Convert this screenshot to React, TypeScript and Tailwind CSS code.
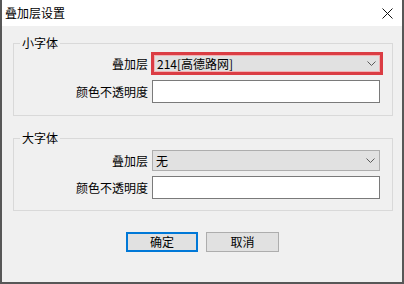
import React from "react";

function Chevron() {
  return (
    <svg width="9" height="5" viewBox="0 0 9 5" className="shrink-0">
      <path d="M0.5 0.5 L4.5 4.5 L8.5 0.5" fill="none" stroke="#5a5a5a" strokeWidth="1" />
    </svg>
  );
}

function Select({ text, highlight }: { text: string; highlight?: boolean }) {
  return highlight ? (
    <div className="flex items-center justify-between h-[23px] w-[232px] border-[3px] border-[#db3d44] bg-[#e1e1e1] shadow-[inset_0_0_0_1px_#f2b3b5] pl-[3px] pr-[4px]">
      <span className="text-[12px] leading-[15px] text-black">{text}</span>
      <Chevron />
    </div>
  ) : (
    <div className="flex items-center justify-between h-[21px] w-[228px] border border-[#adadad] bg-[#e1e1e1] pl-[3px] pr-[4px]">
      <span className="text-[12px] leading-[15px] text-black">{text}</span>
      <Chevron />
    </div>
  );
}

function Group({
  title,
  selectText,
  highlight,
  className,
}: {
  title: string;
  selectText: string;
  highlight?: boolean;
  className: string;
}) {
  return (
    <fieldset className={"border border-[#d9d9d9] px-0 " + className}>
      <legend className="ml-[6px] px-[2px] text-[12px] leading-[16px] text-black">{title}</legend>
      <div className="flex items-center">
        <div className="w-[134px] text-right text-[12px] leading-[16px] text-black">叠加层</div>
        <div className={highlight ? "ml-[3px]" : "ml-[4px]"}>
          <Select text={selectText} highlight={highlight} />
        </div>
      </div>
      <div className="flex items-center mt-[5px]">
        <div className="w-[134px] text-right text-[12px] leading-[16px] text-black">颜色不透明度</div>
        <div className="ml-[4px] h-[23px] w-[228px] border border-[#7a7a7a] bg-white" />
      </div>
    </fieldset>
  );
}

export default function App() {
  return (
    <div className="w-[404px] h-[284px] flex flex-col border-l-2 border-r-2 border-b-2 border-[#575757] bg-[#f0f0f0] font-['Noto_Sans_CJK_SC','Noto_Sans',sans-serif] overflow-hidden">
      <div className="h-[26px] shrink-0 bg-white flex items-center justify-between pl-[3px] pr-[9px]">
        <span className="text-[12px] leading-[16px] text-black">叠加层设置</span>
        <svg width="11" height="11" viewBox="0 0 11 11">
          <path d="M0.5 0.5 L10.5 10.5 M10.5 0.5 L0.5 10.5" stroke="#111" strokeWidth="1" fill="none" />
        </svg>
      </div>
      <div className="flex flex-col flex-1">
        <Group
          title="小字体"
          selectText="214[高德路网]"
          highlight
          className="mt-[9px] ml-[11px] mr-[9px] pt-[1px] pb-[12px]"
        />
        <Group
          title="大字体"
          selectText="无"
          className="mt-[14px] ml-[11px] mr-[9px] pt-[4px] pb-[11px]"
        />
        <div className="flex justify-center gap-[8px] mt-[21px] pl-[1px]">
          <button className="h-[20px] w-[72px] border-2 border-[#0078d7] bg-[#e1e1e1] text-[12px] leading-[14px] text-black">
            确定
          </button>
          <button className="h-[20px] w-[73px] border border-[#adadad] bg-[#e1e1e1] text-[12px] leading-[14px] text-black">
            取消
          </button>
        </div>
      </div>
    </div>
  );
}
